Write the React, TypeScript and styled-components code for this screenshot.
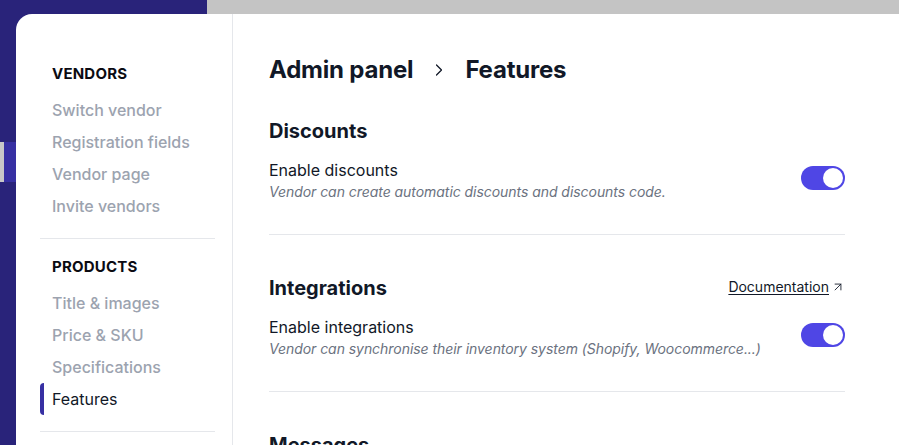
import styled, { createGlobalStyle } from "styled-components";
import { ChevronRight, ArrowUpRight } from "lucide-react";

const GlobalStyle = createGlobalStyle`
    html, body {
        margin: 0;
        padding: 0;
        background: #29237a;
    }
    body {
        font-family: Inter, "Noto Sans", sans-serif;
        color: #111827;
        -webkit-font-smoothing: antialiased;
    }
`;

const Page = styled.div`
    display: flex;
    flex-direction: column;
    height: 445px;
    overflow: hidden;
    background: #29237a;
`;

const TopStrip = styled.div`
    display: flex;
    height: 14px;
    flex-shrink: 0;
    padding-left: 207px;
`;

const TopBlock = styled.div`
    flex: 1;
    background: #c4c4c4;
`;

const Body = styled.div`
    display: flex;
    flex: 1;
    min-height: 0;
`;

const Rail = styled.div`
    width: 16px;
    flex-shrink: 0;
    padding-top: 128px;
    box-sizing: border-box;
`;

const RailItem = styled.div<{ $active?: boolean }>`
    height: 40px;
    box-sizing: border-box;
    border-left: 4px solid ${(p) => (p.$active ? "#c8c8c8" : "transparent")};
    background: ${(p) => (p.$active ? "#3730a3" : "transparent")};
`;

const Card = styled.div`
    flex: 1;
    display: flex;
    background: #ffffff;
    border-top-left-radius: 16px;
    overflow: hidden;
`;

const Sidebar = styled.nav`
    width: 217px;
    flex-shrink: 0;
    box-sizing: border-box;
    padding: 32px 17px 0 24px;
    border-right: 1px solid #e5e7eb;
`;

const Group = styled.div`
    padding: 18px 0 16px;
    border-bottom: 1px solid #e5e7eb;
`;

const GroupTitle = styled.div`
    padding-left: 12px;
    margin-bottom: 10px;
    font-size: 15px;
    line-height: 20px;
    font-weight: 700;
    letter-spacing: 0.2px;
    text-transform: uppercase;
    color: #0b0b12;
`;

const NavItem = styled.div<{ $active?: boolean }>`
    height: 32px;
    line-height: 32px;
    font-size: 16px;
    font-weight: ${(p) => (p.$active ? 400 : 500)};
    color: ${(p) => (p.$active ? "#111827" : "#9ca3af")};
    padding-left: ${(p) => (p.$active ? "8px" : "12px")};
    border-left: ${(p) => (p.$active ? "4px solid #3730a3" : "none")};
    border-radius: 4px 0 0 4px;
    cursor: pointer;
`;

const Main = styled.main`
    flex: 1;
    padding: 40px 0 0 36px;
`;

const Content = styled.div`
    width: 576px;
`;

const Breadcrumb = styled.h1`
    display: flex;
    align-items: center;
    gap: 16px;
    margin: 0;
    font-size: 24px;
    line-height: 32px;
    font-weight: 700;
    letter-spacing: -0.2px;
    color: #111827;
`;

const Section = styled.section`
    padding: 39px 0 32px;
    border-bottom: 1px solid #e5e7eb;

    &:first-of-type {
        padding-top: 31px;
    }
`;

const SectionHead = styled.div`
    display: flex;
    align-items: center;
    justify-content: space-between;
    height: 28px;
    margin-bottom: 13px;
`;

const SectionTitle = styled.h2`
    margin: 0;
    font-size: 20px;
    line-height: 28px;
    font-weight: 700;
    color: #111827;
`;

const DocLink = styled.a`
    display: flex;
    align-items: center;
    gap: 2px;
    margin-top: -3px;
    font-size: 14px;
    line-height: 20px;
    color: #111827;
    text-decoration: none;
    cursor: pointer;

    span {
        text-decoration: underline;
        text-underline-offset: 2px;
    }
`;

const Row = styled.div`
    display: flex;
    align-items: flex-start;
    justify-content: space-between;
`;

const Label = styled.div`
    font-size: 16px;
    line-height: 24px;
    color: #111827;
`;

const Hint = styled.div`
    font-size: 14px;
    line-height: 20px;
    font-style: italic;
    letter-spacing: -0.05px;
    color: #6b7280;
`;

const Toggle = styled.button<{ $on: boolean }>`
    display: flex;
    align-items: center;
    justify-content: ${(p) => (p.$on ? "flex-end" : "flex-start")};
    width: 44px;
    height: 24px;
    margin-top: 8px;
    padding: 2px;
    box-sizing: border-box;
    border: none;
    border-radius: 12px;
    background: ${(p) => (p.$on ? "#4f46e5" : "#e5e7eb")};
    cursor: pointer;

    &::after {
        content: "";
        width: 20px;
        height: 20px;
        border-radius: 50%;
        background: #ffffff;
    }
`;

const vendorLinks = ["Switch vendor", "Registration fields", "Vendor page", "Invite vendors"];
const productLinks = ["Title & images", "Price & SKU", "Specifications", "Features"];

function App() {
    return (
        <Page>
            <GlobalStyle />
            <TopStrip>
                <TopBlock />
            </TopStrip>
            <Body>
                <Rail>
                    <RailItem $active />
                </Rail>
                <Card>
                    <Sidebar>
                        <Group>
                            <GroupTitle>Vendors</GroupTitle>
                            {vendorLinks.map((l) => (
                                <NavItem key={l}>{l}</NavItem>
                            ))}
                        </Group>
                        <Group>
                            <GroupTitle>Products</GroupTitle>
                            {productLinks.map((l) => (
                                <NavItem key={l} $active={l === "Features"}>
                                    {l}
                                </NavItem>
                            ))}
                        </Group>
                    </Sidebar>
                    <Main>
                        <Content>
                            <Breadcrumb>
                                Admin panel
                                <ChevronRight size={20} strokeWidth={1.5} />
                                Features
                            </Breadcrumb>

                            <Section>
                                <SectionHead>
                                    <SectionTitle>Discounts</SectionTitle>
                                </SectionHead>
                                <Row>
                                    <div>
                                        <Label>Enable discounts</Label>
                                        <Hint>Vendor can create automatic discounts and discounts code.</Hint>
                                    </div>
                                    <Toggle $on />
                                </Row>
                            </Section>

                            <Section>
                                <SectionHead>
                                    <SectionTitle>Integrations</SectionTitle>
                                    <DocLink>
                                        <span>Documentation</span>
                                        <ArrowUpRight size={14} strokeWidth={1.5} />
                                    </DocLink>
                                </SectionHead>
                                <Row>
                                    <div>
                                        <Label>Enable integrations</Label>
                                        <Hint>Vendor can synchronise their inventory system (Shopify, Woocommerce...)</Hint>
                                    </div>
                                    <Toggle $on />
                                </Row>
                            </Section>

                            <Section>
                                <SectionHead>
                                    <SectionTitle>Messages</SectionTitle>
                                </SectionHead>
                            </Section>
                        </Content>
                    </Main>
                </Card>
            </Body>
        </Page>
    );
}

export default App;
